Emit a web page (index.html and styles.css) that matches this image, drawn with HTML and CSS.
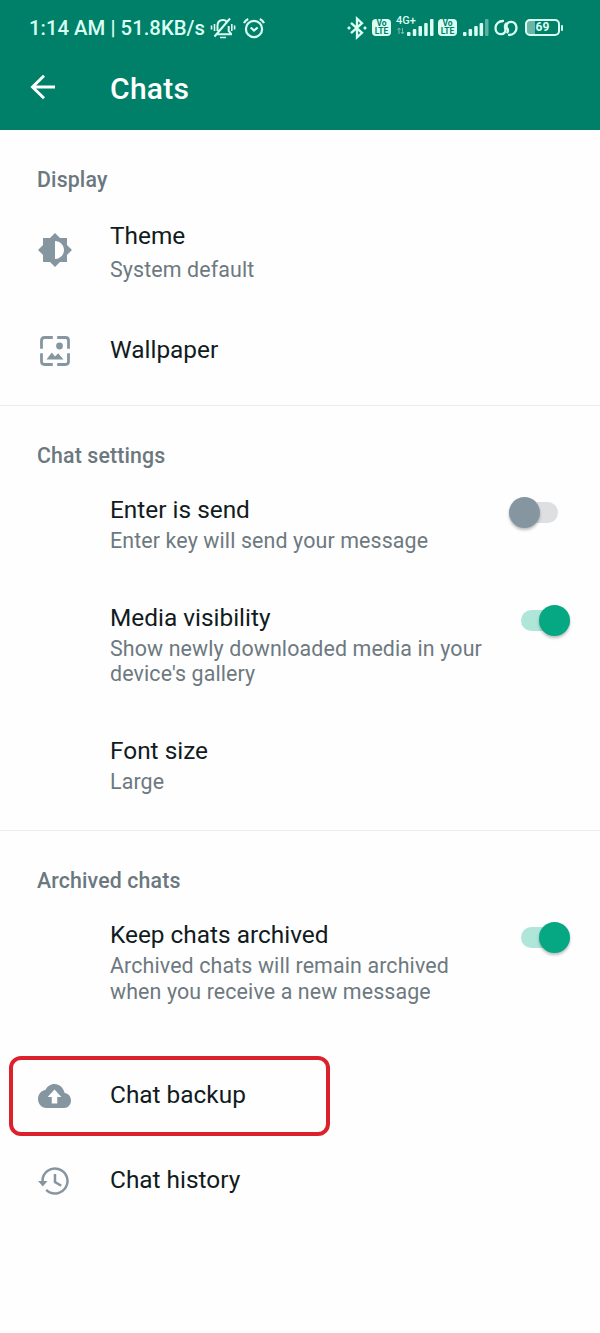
FILE: index.html
```html
<!DOCTYPE html>
<html lang="en">
<head>
<meta charset="utf-8">
<title>Chats</title>
<link rel="stylesheet" href="styles.css">
</head>
<body>
<header class="header">
  <div class="status">
    <span class="clock">1:14 AM | 51.8KB/s</span>
    <svg class="bell" width="26" height="24" viewBox="0 0 26 24" fill="none" stroke="currentColor" stroke-width="2">
      <path d="M7.500 18.200h14.500M7.500 15V9.800c0-3.500 2-5.800 5.500-5.800 1.500 0 2.800.6 3.700 1.600M18.700 10v5l2.500 2.800M4.500 20.500L20 2.500"/>
      <path d="M10 21.500h6M4.500 8v7M1.500 9.500v4M21.800 8v7M24.600 9.500v4" stroke-width="1.600"/>
    </svg>
    <svg class="alarm" width="24" height="24" viewBox="0 0 24 24" fill="none" stroke="currentColor" stroke-width="2.200">
      <circle cx="12" cy="13" r="8.100"/><path d="M8.700 11.500l3.300 3 3.700-3M2 7.200c.8-2 2.200-3.400 4.200-4.300M22 7.200c-.8-2-2.200-3.400-4.200-4.300"/>
    </svg>
    <svg class="bluetooth" width="20" height="24" viewBox="0 0 20 24" fill="none" stroke="currentColor" stroke-width="2.300">
      <path d="M4 6.800l11 10-5 4.500V2.700l5 4.500-11 10"/><circle cx="2" cy="12" r="1.200" fill="currentColor" stroke-width=".8"/><circle cx="18" cy="12" r="1.200" fill="currentColor" stroke-width=".8"/>
    </svg>
    <span class="volte volte-one"><span>Vo</span><span>LTE</span></span>
    <span class="mobile">
      <span class="network">4G+</span>
      <svg class="bars" width="38" height="18" viewBox="0 0 38 18">
        <path d="M3 9v6M1.500 11L3 9l1.500 2M6.500 9v6M5 13l1.500 2L8 13" fill="none" stroke="#72bdad"/>
        <g fill="currentColor"><rect x="11" y="13" width="3.500" height="4" rx="1"/><rect x="16.800" y="10" width="3.500" height="7" rx="1"/><rect x="22.500" y="7" width="3.500" height="10" rx="1"/><rect x="28.200" y="4" width="3.500" height="13" rx="1"/><rect x="34" y="0" width="3.500" height="17" rx="1"/></g>
      </svg>
    </span>
    <span class="volte volte-two"><span>Vo</span><span>LTE</span></span>
    <svg class="signal" width="28" height="18" viewBox="0 0 28 18" fill="currentColor">
      <rect x="1" y="13" width="3.500" height="4" rx="1"/><rect x="6.600" y="10" width="3.500" height="7" rx="1"/><rect x="12.200" y="7" width="3.500" height="10" rx="1"/><rect x="17.600" y="4" width="3.500" height="13" rx="1"/><rect x="23" y="0" width="3.500" height="17" rx="1" opacity=".4"/>
    </svg>
    <svg class="link" width="24" height="20" viewBox="0 0 24 20" fill="none" stroke="currentColor" stroke-width="2.300" stroke-linecap="round">
      <path d="M9 3C4.800 3 1.500 6 1.500 10c0 3.600 2.300 6.200 5.300 6.200 3.700 0 5.200-2.700 4.400-5.700-.5-2-.4-3.300.6-4.700M15 17c4.200 0 7.500-3 7.500-7 0-3.600-2.300-6.200-5.300-6.200-3.700 0-5.200 2.700-4.400 5.700M15 17M12.800 9.500c1.600 2.100 1.600 3.500.6 4.900" transform="translate(0 0)"/>
    </svg>
    <span class="battery"><span class="battery-body">69</span><span class="battery-tip"></span></span>
  </div>
  <div class="appbar">
    <svg class="back" width="26" height="26" viewBox="0 0 26 26" fill="none" stroke="currentColor" stroke-width="2.900"><path d="M25 13H3M14 1.800L2.500 13 14 24.200"/></svg>
    <h1>Chats</h1>
  </div>
</header>
<main>
  <section class="section display">
    <h2>Display</h2>
    <div class="row theme">
      <svg class="icon" width="36" height="36" viewBox="0 0 24 24" fill="currentColor"><path d="M20 15.310L23.310 12 20 8.690V4h-4.690L12 .690 8.690 4H4v4.690L.690 12 4 15.310V20h4.690L12 23.310 15.310 20H20v-4.690zM12 18V6c3.310 0 6 2.690 6 6s-2.690 6-6 6z"/></svg>
      <div class="text"><h3>Theme</h3><p>System default</p></div>
    </div>
    <div class="row wallpaper">
      <svg class="icon" width="30" height="30" viewBox="0 0 30 30"><path d="M1.500 12.800V4.500q0-3 3-3h8.300M17.200 1.500h8.300q3 0 3 3v8.300M28.500 17.200v8.300q0 3-3 3h-8.300M12.800 28.500H4.500q-3 0-3-3v-8.300" fill="none" stroke="currentColor" stroke-width="2.800"/><path d="M6.500 23.500l5.300-7 3.200 4 3.200-3.200 5.300 6.200z" fill="currentColor"/><circle cx="19.500" cy="10" r="3.400" fill="currentColor"/></svg>
      <div class="text"><h3>Wallpaper</h3></div>
    </div>
  </section>
  <section class="section settings">
    <h2>Chat settings</h2>
    <div class="row first"><div class="text"><h3>Enter is send</h3><p>Enter key will send your message</p></div><span class="switch off"></span></div>
    <div class="row media"><div class="text"><h3>Media visibility</h3><p>Show newly downloaded media in your<br>device's gallery</p></div><span class="switch on"></span></div>
    <div class="row font"><div class="text"><h3>Font size</h3><p>Large</p></div></div>
  </section>
  <section class="section archived">
    <h2>Archived chats</h2>
    <div class="row first"><div class="text"><h3>Keep chats archived</h3><p>Archived chats will remain archived<br>when you receive a new message</p></div><span class="switch on"></span></div>
    <div class="row backup">
      <svg class="icon" width="33" height="24" viewBox="0 0 24 16" preserveAspectRatio="none" fill="currentColor"><path transform="translate(0 -4)" d="M19.350 10.040C18.670 6.590 15.640 4 12 4 9.110 4 6.600 5.640 5.350 8.040 2.340 8.360 0 10.910 0 14c0 3.310 2.690 6 6 6h13c2.760 0 5-2.240 5-5 0-2.640-2.050-4.780-4.650-4.960zM14 12.700v4.300h-4v-4.300H7l5-5 5 5h-3z"/></svg>
      <div class="text"><h3>Chat backup</h3></div>
    </div>
    <div class="row history">
      <svg class="icon" width="32" height="30" viewBox="0 0 32 30" fill="none" stroke="currentColor" stroke-width="2.500"><path d="M4.500 15a12.500 12.500 0 1 1 3.700 8.900M17 8v8l6.200 3.800"/><path d="M0 15h9.500l-4.700 5.500z" fill="currentColor" stroke="none"/></svg>
      <div class="text"><h3>Chat history</h3></div>
    </div>
  </section>
</main>
</body>
</html>
```
FILE: styles.css
```css
* { box-sizing: border-box; }
body { margin: 0; background: #fefefe; color: #111b21; font-family: Roboto, sans-serif; }
h1, h2, h3, p { margin: 0; font-weight: 400; }
svg { display: block; flex: none; }
.header { height: 130px; background: #008069; color: #fff; }
.status { display: flex; align-items: center; height: 55px; padding-left: 29px; color: #d9fff3; }
.clock { width: 181px; font-size: 20.300px; font-weight: 500; letter-spacing: .03px; white-space: nowrap; }
.alarm { margin-left: 6px; }
.bluetooth { margin-left: 81px; }
.volte { display: flex; flex-direction: column; justify-content: center; width: 19px; height: 17px; border-radius: 4px; background: #d9fff3; color: #008069; font-size: 8.500px; line-height: 7.500px; font-weight: 700; text-align: center; }
.volte-one { margin-left: 5px; }
.mobile { display: flex; flex-direction: column; width: 38px; height: 24px; margin-left: 5px; margin-top: -4px; }
.network { height: 5px; font-size: 11px; line-height: 14px; font-weight: 500; }
.volte-two { margin-left: 4px; }
.signal { margin-left: 5px; }
.link { margin-left: 4px; margin-right: 1px; }
.battery { display: flex; align-items: center; gap: 1px; margin-left: 6px; }
.battery-body { width: 35px; height: 17px; border: 2px solid; border-radius: 5px; background: linear-gradient(90deg, #68b6a3 8px, transparent 8px); font-size: 12px; line-height: 13px; font-weight: 700; text-align: center; }
.battery-tip { width: 2px; height: 6px; border-radius: 1px; background: currentColor; }
.appbar { display: flex; align-items: center; height: 64px; padding-left: 30px; }
.appbar h1 { margin: 3px 0 0 54px; font-size: 30px; font-weight: 500; line-height: 36px; letter-spacing: .3px; }
.section { padding-top: 37px; }
.display { height: 275px; }
.settings, .archived { border-top: 1px solid #e9edef; }
.settings { height: 425px; }
h2 { padding-left: 37px; color: #6b787e; font-size: 21.300px; line-height: 26px; font-weight: 500; letter-spacing: .15px; }
.row { display: flex; padding-left: 110px; padding-right: 30px; }
.row:has(.icon) { padding-left: 0; }
.text { flex: 1; }
.icon { color: #8696a0; }
h3 { font-size: 24.400px; line-height: 28px; }
p { color: #6d797e; font-size: 21.400px; line-height: 25.700px; letter-spacing: .12px; margin-top: 4px; }
.theme { margin-top: 29px; }
.theme p { margin-top: 7px; }
.theme .icon { margin: 10px 37px 0 37px; }
.wallpaper { margin-top: 53px; }
.wallpaper .icon { margin: 0 40px; }
.first { margin-top: 27px; }
.media { margin-top: 50px; }
.font { margin-top: 50px; }
.backup { align-items: center; width: 321px; height: 80px; margin: 52px 0 0 9px; border: 4px solid #db222c; border-radius: 12px; }
.backup .icon { margin: 0 39px 0 25px; }
.backup .text { margin-top: -2px; }
.history { margin-top: 30px; }
.history .icon { margin: 0 40px 0 38px; }
.switch { display: flex; align-items: center; width: 49px; height: 21px; margin-top: 6px; border-radius: 11px; }
.switch::before { content: ""; width: 31px; height: 31px; flex: none; border-radius: 50%; box-shadow: 0 2px 3px #0004; }
.on { justify-content: flex-end; background: #b0e6d9; }
.on::before { background: #06a884; }
.off { margin-right: 12px; background: #dedfe1; }
.off::before { background: #8696a0; }
```
